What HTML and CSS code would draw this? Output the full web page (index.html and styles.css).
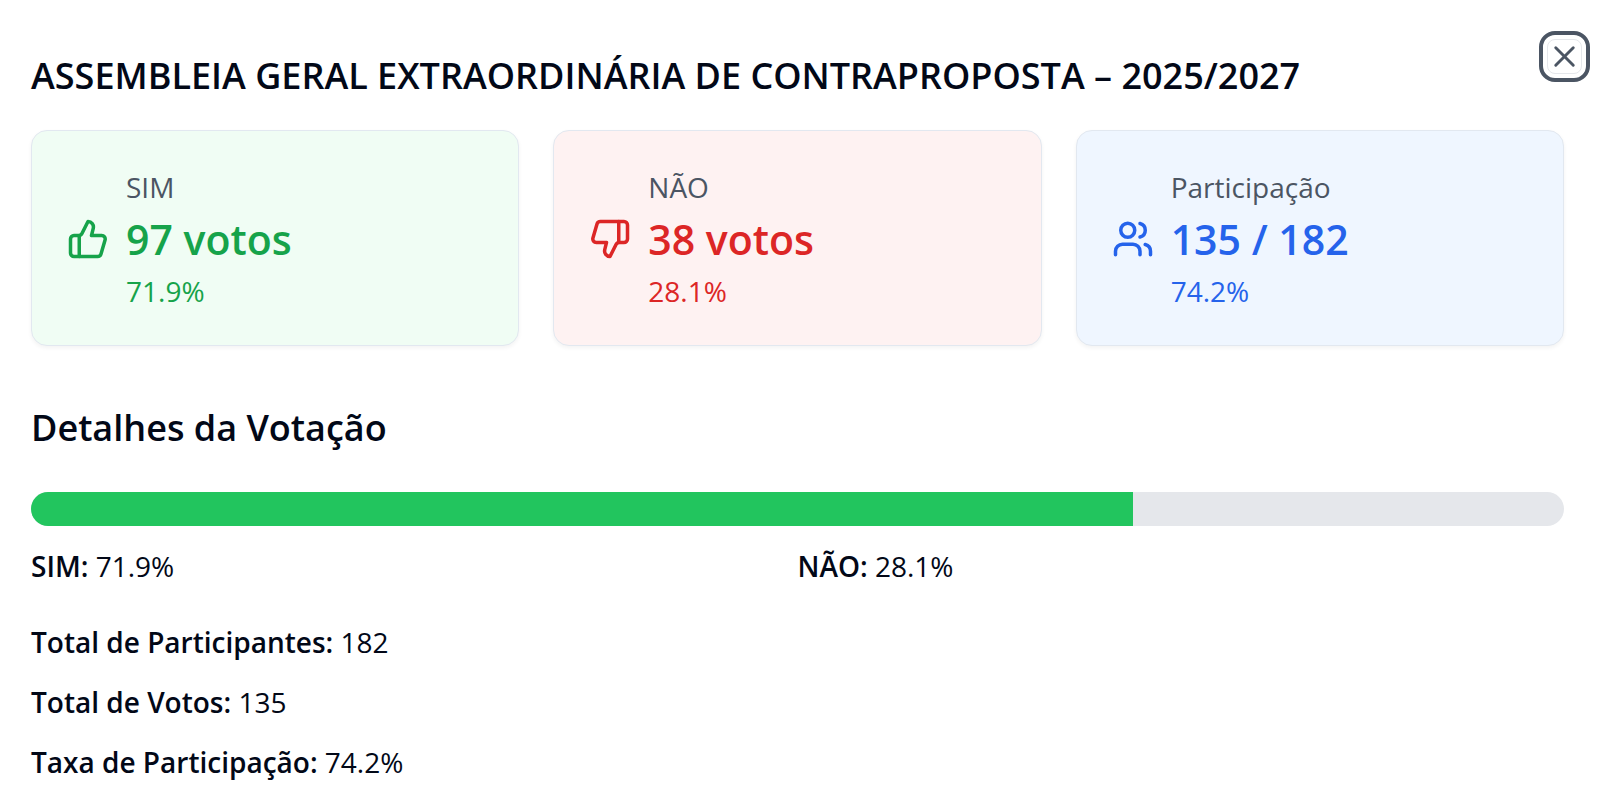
FILE: index.html
```html
<!DOCTYPE html>
<html lang="pt-BR">
<head>
    <meta charset="UTF-8">
    <meta name="viewport" content="width=device-width, initial-scale=1.0">
    <title>Resultado da Votação</title>
    <link rel="stylesheet" href="styles.css">
</head>
<body>
    <main class="dialog">
        <button class="close-btn" type="button" aria-label="Fechar">
            <svg viewBox="0 0 24 24"><path d="M18 6 6 18"/><path d="m6 6 12 12"/></svg>
        </button>

        <h1 class="title">ASSEMBLEIA GERAL EXTRAORDINÁRIA DE CONTRAPROPOSTA – 2025/2027</h1>

        <div class="cards">
            <div class="card card-yes">
                <svg class="icon" viewBox="0 0 24 24">
                    <path d="M7 10v12"/>
                    <path d="M15 5.88 14 10h5.83a2 2 0 0 1 1.92 2.56l-2.33 8A2 2 0 0 1 17.5 22H4a2 2 0 0 1-2-2v-8a2 2 0 0 1 2-2h2.76a2 2 0 0 0 1.79-1.11L12 2a3.13 3.13 0 0 1 3 3.88Z"/>
                </svg>
                <div>
                    <p class="card-label">SIM</p>
                    <p class="card-value">97 votos</p>
                    <p>71.9%</p>
                </div>
            </div>
            <div class="card card-no">
                <svg class="icon" viewBox="0 0 24 24">
                    <path d="M17 14V2"/>
                    <path d="M9 18.12 10 14H4.17a2 2 0 0 1-1.92-2.56l2.33-8A2 2 0 0 1 6.5 2H20a2 2 0 0 1 2 2v8a2 2 0 0 1-2 2h-2.76a2 2 0 0 0-1.79 1.11L12 22a3.13 3.13 0 0 1-3-3.88Z"/>
                </svg>
                <div>
                    <p class="card-label">NÃO</p>
                    <p class="card-value">38 votos</p>
                    <p>28.1%</p>
                </div>
            </div>
            <div class="card card-total">
                <svg class="icon" viewBox="0 0 24 24">
                    <path d="M16 21v-2a4 4 0 0 0-4-4H6a4 4 0 0 0-4 4v2"/>
                    <circle cx="9" cy="7" r="4"/>
                    <path d="M22 21v-2a4 4 0 0 0-3-3.87"/>
                    <path d="M16 3.13a4 4 0 0 1 0 7.75"/>
                </svg>
                <div>
                    <p class="card-label">Participação</p>
                    <p class="card-value">135 / 182</p>
                    <p>74.2%</p>
                </div>
            </div>
        </div>

        <section class="details">
            <h2 class="title">Detalhes da Votação</h2>
            <div class="bar">
                <div class="bar-fill" style="width: 71.9%"></div>
            </div>
            <div class="split">
                <p><strong>SIM:</strong> 71.9%</p>
                <p><strong>NÃO:</strong> 28.1%</p>
            </div>
            <div class="totals">
                <p><strong>Total de Participantes:</strong> 182</p>
                <p><strong>Total de Votos:</strong> 135</p>
                <p><strong>Taxa de Participação:</strong> 74.2%</p>
            </div>
        </section>
    </main>
</body>
</html>
```

FILE: styles.css
```css
* {
    box-sizing: border-box;
}
body {
    margin: 0;
    background-color: #fff;
    color: #020817;
    font-family: "Segoe UI", "Open Sans", "Noto Sans", sans-serif;
    font-size: 28px;
    font-weight: 400;
    line-height: 44px;
}
h1, h2, p {
    margin: 0;
}
strong {
    font-weight: 600;
}
svg {
    fill: none;
    stroke: currentColor;
    stroke-width: 2;
    stroke-linecap: round;
    stroke-linejoin: round;
}
.dialog {
    position: relative;
    padding: 54px 36px 16px 31px;
}
.title {
    font-size: 36px;
    font-weight: 600;
    line-height: 44px;
}
.close-btn {
    position: absolute;
    top: 31px;
    right: 10px;
    display: flex;
    align-items: center;
    justify-content: center;
    width: 51px;
    height: 51px;
    padding: 0;
    border: 4px solid #4b5563;
    border-radius: 16px;
    background-color: #fff;
    color: #4b5563;
    cursor: pointer;
}
.close-btn::before {
    content: "";
    position: absolute;
    inset: 4px;
    border: 1px solid #e5e7eb;
    border-radius: 8px;
}
.close-btn svg {
    width: 35px;
    height: 35px;
    flex-shrink: 0;
}
.cards {
    display: grid;
    grid-template-columns: repeat(3, 1fr);
    gap: 34px;
    margin-top: 32px;
}
.card {
    display: flex;
    align-items: center;
    gap: 17px;
    padding: 34px 35px 32px;
    border: 1px solid #e2e8f0;
    border-radius: 16px;
    box-shadow: 0 2px 4px rgba(0, 0, 0, 0.05);
}
.card-yes {
    background-color: #f0fdf4;
    color: #16a34a;
}
.card-no {
    background-color: #fef2f2;
    color: #dc2626;
}
.card-total {
    background-color: #eff6ff;
    color: #2563eb;
}
.icon {
    width: 42px;
    height: 42px;
    flex-shrink: 0;
}
.card-label {
    color: #4b5563;
}
.card-value {
    font-size: 41px;
    font-weight: 600;
    line-height: 60px;
}
.details {
    margin-top: 60px;
}
.bar {
    height: 34px;
    margin-top: 42px;
    overflow: hidden;
    border-radius: 17px;
    background-color: #e5e7eb;
}
.bar-fill {
    height: 100%;
    background-color: #22c55e;
}
.split {
    display: grid;
    grid-template-columns: 1fr 1fr;
    margin-top: 18px;
}
.totals {
    display: grid;
    gap: 16px;
    margin-top: 32px;
}
```
